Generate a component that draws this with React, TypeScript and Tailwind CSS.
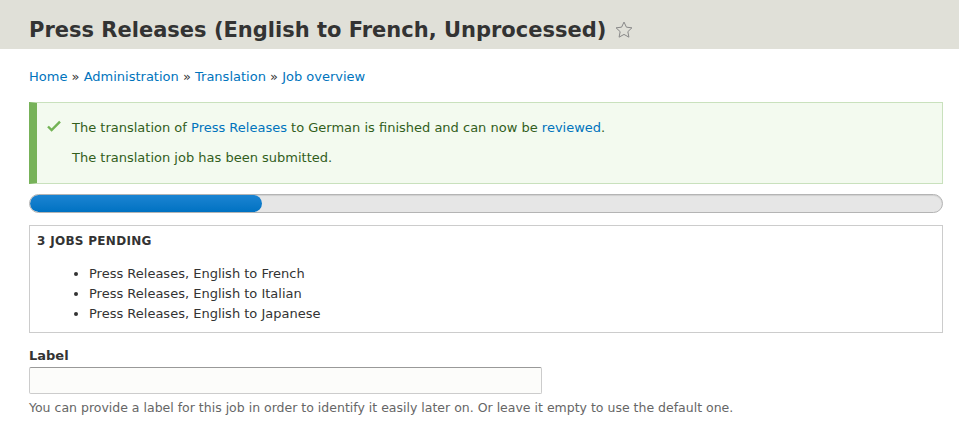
import React from "react";

export default function App() {
  const font = { fontFamily: '"DejaVu Sans", sans-serif' };
  return (
    <div className="min-h-screen bg-white text-[13px] text-[#333]" style={font}>
      <div className="h-[49px] bg-[#e0e0d8] px-[29px] pt-[11px] flex items-center">
        <h1 className="text-[21px] font-bold text-[#333] leading-none flex items-center">
          Press Releases (English to French, Unprocessed)
          <svg className="ml-[8px]" width="20" height="20" viewBox="0 0 24 24" fill="none" stroke="#888" strokeWidth="1.2" strokeLinejoin="round">
            <path d="M12 2.5l2.9 6.1 6.6.8-4.9 4.6 1.3 6.6L12 17.3l-5.9 3.3 1.3-6.6-4.9-4.6 6.6-.8z" />
          </svg>
        </h1>
      </div>
      <div className="px-[29px] pr-[16px]">
        <div className="pt-[20px] text-[13px] leading-[16px] text-[#0074bd]">
          <a>Home</a> <span className="text-[#333]">»</span> <a>Administration</a>{" "}
          <span className="text-[#333]">»</span> <a>Translation</a> <span className="text-[#333]">»</span>{" "}
          <a>Job overview</a>
        </div>
        <div className="mt-[17px] flex border border-[#c9e1bd] border-l-[8px] border-l-[#77b259] bg-[#f3faef] text-[#325e1c] h-[82px]">
          <div className="pl-[9px] pt-[15px]">
            <svg width="16" height="16" viewBox="0 0 16 16">
              <path d="M2 8.5l3.6 3.6L14 3.6" fill="none" stroke="#73b355" strokeWidth="2.4" />
            </svg>
          </div>
          <div className="pl-[10px] pt-[15px] leading-[20px]">
            <p>
              The translation of <a className="text-[#0074bd]">Press Releases</a> to German is finished and can now be{" "}
              <a className="text-[#0074bd]">reviewed</a>.
            </p>
            <p className="mt-[10px]">The translation job has been submitted.</p>
          </div>
        </div>
        <div className="mt-[10px] h-[19px] rounded-full border border-[#b4b4b4] bg-[#e6e6e6] overflow-hidden flex shadow-[inset_0_1px_1px_rgba(0,0,0,0.1)]">
          <div className="w-[232px] h-full rounded-full bg-[#0f7ac8] bg-gradient-to-b from-[#1a84d2] to-[#0072c2]" />
        </div>
        <div className="mt-[12px] border border-[#ccc] h-[108px] pt-[7px] pl-[7px]">
          <div className="text-[12px] font-bold uppercase tracking-[0.3px] leading-[16px]">3 jobs pending</div>
          <ul className="mt-[15px] pl-[52px] list-disc leading-[20px] text-[13px]">
            <li>Press Releases, English to French</li>
            <li>Press Releases, English to Italian</li>
            <li>Press Releases, English to Japanese</li>
          </ul>
        </div>
        <div className="mt-[15px] font-bold text-[13px] leading-[16px]">Label</div>
        <div className="mt-[3px] w-[513px] h-[27px] border border-[#ccc] border-t-[#999] rounded-[2px] bg-[#fcfcfa]" />
        <div className="mt-[6px] text-[12.5px] text-[#666] leading-[16px]">
          You can provide a label for this job in order to identify it easily later on. Or leave it empty to use the default one.
        </div>
      </div>
    </div>
  );
}
